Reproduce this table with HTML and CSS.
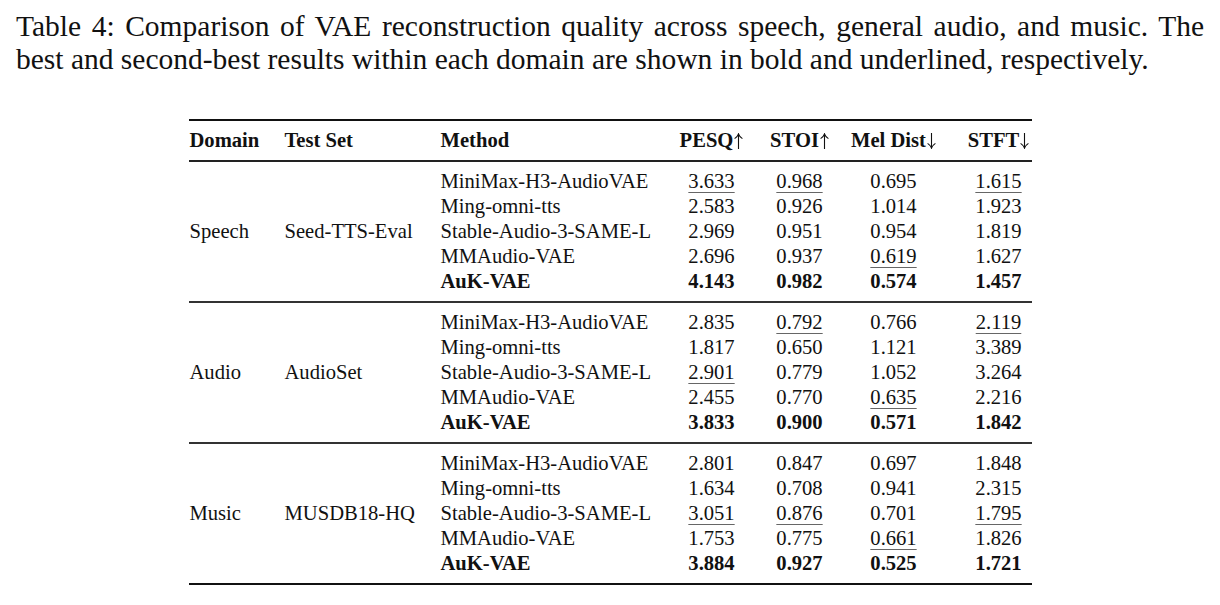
FILE: index.html
```html
<!DOCTYPE html>
<html lang="en">
<head>
  <meta charset="UTF-8"/>
  <meta name="viewport" content="width=device-width, initial-scale=1.0"/>
  <title>Table 4 - VAE reconstruction quality</title>
  <link rel="stylesheet" href="styles.css">
</head>
<body>
<!-- -------------------------------------------------------------------------- -->
  <p class="caption">
    <span class="caption-line">Table 4: Comparison of VAE reconstruction quality across speech, general audio, and music. The</span>
    <span class="caption-last">best and second-best results within each domain are shown in bold and underlined, respectively.</span>
  </p>

<!-- -------------------------------------------------------------------------- -->
  <table class="results">
    <colgroup>
      <col class="c-domain">
      <col class="c-set">
      <col class="c-method">
      <col class="c-pesq">
      <col class="c-stoi">
      <col class="c-mel">
      <col class="c-stft">
    </colgroup>
    <thead>
      <tr>
        <th class="left first">Domain</th>
        <th class="left">Test Set</th>
        <th class="left">Method</th>
        <th>PESQ<svg class="arrow" viewBox="0 0 9 16"><path d="M4.5 1.5V16M0.6 5.6Q3.6 3.6 4.5 0.8Q5.4 3.6 8.4 5.6"/></svg></th>
        <th>STOI<svg class="arrow" viewBox="0 0 9 16"><path d="M4.5 1.5V16M0.6 5.6Q3.6 3.6 4.5 0.8Q5.4 3.6 8.4 5.6"/></svg></th>
        <th>Mel Dist<svg class="arrow" viewBox="0 0 9 16"><path d="M4.5 0V14.5M0.6 10.4Q3.6 12.4 4.5 15.2Q5.4 12.4 8.4 10.4"/></svg></th>
        <th class="last">STFT<svg class="arrow" viewBox="0 0 9 16"><path d="M4.5 0V14.5M0.6 10.4Q3.6 12.4 4.5 15.2Q5.4 12.4 8.4 10.4"/></svg></th>
      </tr>
    </thead>

    <tbody>
      <tr>
        <td class="left first group" rowspan="5">Speech</td>
        <td class="left group" rowspan="5">Seed-TTS-Eval</td>
        <td class="left">MiniMax-H3-AudioVAE</td>
        <td><u>3.633</u></td><td><u>0.968</u></td><td>0.695</td><td class="last"><u>1.615</u></td>
      </tr>
      <tr>
        <td class="left">Ming-omni-tts</td>
        <td>2.583</td><td>0.926</td><td>1.014</td><td class="last">1.923</td>
      </tr>
      <tr>
        <td class="left">Stable-Audio-3-SAME-L</td>
        <td>2.969</td><td>0.951</td><td>0.954</td><td class="last">1.819</td>
      </tr>
      <tr>
        <td class="left">MMAudio-VAE</td>
        <td>2.696</td><td>0.937</td><td><u>0.619</u></td><td class="last">1.627</td>
      </tr>
      <tr class="best">
        <td class="left">AuK-VAE</td>
        <td>4.143</td><td>0.982</td><td>0.574</td><td class="last">1.457</td>
      </tr>
    </tbody>

    <tbody>
      <tr>
        <td class="left first group" rowspan="5">Audio</td>
        <td class="left group" rowspan="5">AudioSet</td>
        <td class="left">MiniMax-H3-AudioVAE</td>
        <td>2.835</td><td><u>0.792</u></td><td>0.766</td><td class="last"><u>2.119</u></td>
      </tr>
      <tr>
        <td class="left">Ming-omni-tts</td>
        <td>1.817</td><td>0.650</td><td>1.121</td><td class="last">3.389</td>
      </tr>
      <tr>
        <td class="left">Stable-Audio-3-SAME-L</td>
        <td><u>2.901</u></td><td>0.779</td><td>1.052</td><td class="last">3.264</td>
      </tr>
      <tr>
        <td class="left">MMAudio-VAE</td>
        <td>2.455</td><td>0.770</td><td><u>0.635</u></td><td class="last">2.216</td>
      </tr>
      <tr class="best">
        <td class="left">AuK-VAE</td>
        <td>3.833</td><td>0.900</td><td>0.571</td><td class="last">1.842</td>
      </tr>
    </tbody>

    <tbody>
      <tr>
        <td class="left first group" rowspan="5">Music</td>
        <td class="left group" rowspan="5">MUSDB18-HQ</td>
        <td class="left">MiniMax-H3-AudioVAE</td>
        <td>2.801</td><td>0.847</td><td>0.697</td><td class="last">1.848</td>
      </tr>
      <tr>
        <td class="left">Ming-omni-tts</td>
        <td>1.634</td><td>0.708</td><td>0.941</td><td class="last">2.315</td>
      </tr>
      <tr>
        <td class="left">Stable-Audio-3-SAME-L</td>
        <td><u>3.051</u></td><td><u>0.876</u></td><td>0.701</td><td class="last"><u>1.795</u></td>
      </tr>
      <tr>
        <td class="left">MMAudio-VAE</td>
        <td>1.753</td><td>0.775</td><td><u>0.661</u></td><td class="last">1.826</td>
      </tr>
      <tr class="best">
        <td class="left">AuK-VAE</td>
        <td>3.884</td><td>0.927</td><td>0.525</td><td class="last">1.721</td>
      </tr>
    </tbody>
  </table>
</body>
</html>
```

FILE: styles.css
```css
  body {
    font-family: 'Liberation Serif', 'Times New Roman', serif;
    margin: 0;
    padding: 10px 16px 0;
    background-color: #fff;
    color: #111;
  }

  /* caption: first line justified to full width */
  .caption {
    margin: 0;
    font-size: 29.5px;
    line-height: 33px;
  }

  .caption-line {
    display: block;
    text-align: justify;
    text-align-last: justify;
  }

  .caption-last {
    display: block;
  }

  /* booktabs-like table */
  .results {
    width: 843px;
    margin: 43px auto 0;
    table-layout: fixed;
    border-collapse: collapse;
    font-size: 20.6px;
    line-height: 25px;
  }

  .c-domain { width: 96px; }
  .c-set    { width: 156px; }
  .c-method { width: 226px; }
  .c-pesq   { width: 90px; }
  .c-stoi   { width: 86px; }
  .c-mel    { width: 102px; }
  .c-stft   { width: 87px; }

  .results th,
  .results td {
    padding: 0;
    text-align: center;
    vertical-align: middle;
    white-space: nowrap;
  }

  .results .left {
    text-align: left;
  }

  .results .first {
    padding-left: 1px;
  }

  .results .last {
    padding-left: 21px;
  }

  .results thead tr {
    border-top: 2px solid #111;
    border-bottom: 2px solid #222;
  }

  .results th {
    font-weight: bold;
    padding-top: 7px;
    padding-bottom: 7px;
  }

  .arrow {
    width: 9px;
    height: 16px;
    margin-left: 1px;
    vertical-align: -2px;
    fill: none;
    stroke: #111;
    stroke-width: 1.1;
  }

  .results tbody + tbody {
    border-top: 2px solid #333;
  }

  .results tbody:last-child {
    border-bottom: 2px solid #111;
  }

  .results tbody tr:first-child td {
    padding-top: 7px;
  }

  .results tbody tr:last-child td,
  .results tbody td.group {
    padding-bottom: 7px;
  }

  .results .best td {
    font-weight: bold;
  }

  u {
    text-decoration: underline;
    text-decoration-color: #666;
    text-decoration-thickness: 1px;
    text-underline-offset: 4px;
  }
```
